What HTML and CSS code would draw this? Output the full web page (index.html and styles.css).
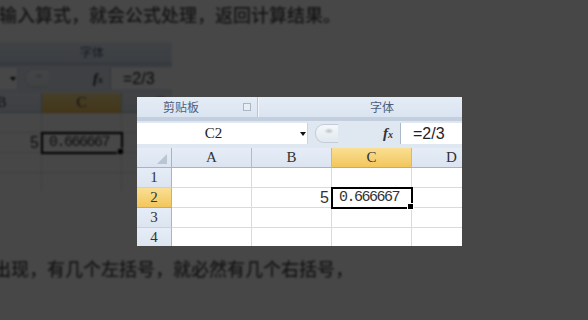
FILE: index.html
```html
<!DOCTYPE html>
<html lang="zh-CN">
<head>
    <meta charset="UTF-8">
    <meta name="viewport" content="width=device-width, initial-scale=1.0">
    <title>公式计算</title>
    <link rel="stylesheet" href="styles.css">
</head>
<body>
    <!-- Article behind the lightbox -->
    <div class="article">
        <p class="lead">格中输入算式，就会公式处理，返回计算结果。</p>
        <div class="figure">
            <div class="sheet">
                <div class="ribbon">
                    <div class="group clip">剪贴板<span class="launcher"></span></div>
                    <div class="group font">字体</div>
                </div>
                <div class="fbar">
                    <div class="namebox"><span class="ref">C2</span><span class="arrow"></span></div>
                    <div class="fbar-mid"><span class="knob"></span><span class="fx">f<small>x</small></span></div>
                    <div class="formula">=2/3</div>
                </div>
                <div class="grid">
                    <div class="corner"></div>
                    <div class="colhead">A</div>
                    <div class="colhead">B</div>
                    <div class="colhead active">C</div>
                    <div class="colhead">D</div>

                    <div class="rowhead">1</div>
                    <div class="cell"></div><div class="cell"></div><div class="cell"></div><div class="cell"></div>

                    <div class="rowhead active">2</div>
                    <div class="cell"></div><div class="cell num">5</div><div class="cell selected">0.666667</div><div class="cell"></div>

                    <div class="rowhead">3</div>
                    <div class="cell"></div><div class="cell"></div><div class="cell"></div><div class="cell"></div>

                    <div class="rowhead">4</div>
                    <div class="cell"></div><div class="cell"></div><div class="cell"></div><div class="cell"></div>
                </div>
            </div>
        </div>
        <p class="tail">对出现，有几个左括号，就必然有几个右括号，</p>
    </div>

    <!-- Lightbox -->
    <div class="lightbox">
        <div class="sheet">
            <div class="ribbon">
                <div class="group clip">剪贴板<span class="launcher"></span></div>
                <div class="group font">字体</div>
            </div>
            <div class="fbar">
                <div class="namebox"><span class="ref">C2</span><span class="arrow"></span></div>
                <div class="fbar-mid"><span class="knob"></span><span class="fx">f<small>x</small></span></div>
                <div class="formula">=2/3</div>
            </div>
            <div class="grid">
                <div class="corner"></div>
                <div class="colhead">A</div>
                <div class="colhead">B</div>
                <div class="colhead active">C</div>
                <div class="colhead">D</div>

                <div class="rowhead">1</div>
                <div class="cell"></div><div class="cell"></div><div class="cell"></div><div class="cell"></div>

                <div class="rowhead active">2</div>
                <div class="cell"></div><div class="cell num">5</div><div class="cell selected">0.666667</div><div class="cell"></div>

                <div class="rowhead">3</div>
                <div class="cell"></div><div class="cell"></div><div class="cell"></div><div class="cell"></div>

                <div class="rowhead">4</div>
                <div class="cell"></div><div class="cell"></div><div class="cell"></div><div class="cell"></div>
            </div>
        </div>
    </div>
</body>
</html>
```

FILE: styles.css
```css
body {
    margin: 0;
    background-color: #ffffff;
    font-family: "Noto Sans CJK SC", "Noto Sans", sans-serif;
    overflow: hidden;
}
.article {
    margin-left: -41px;
    filter: blur(0.8px);
}
.article p {
    margin: 0;
    font-size: 18px;
    line-height: 28px;
    font-weight: 500;
    color: #4a4a4a;
    white-space: nowrap;
}
.article .lead {
    text-indent: 4px;
}
.article .figure {
    margin: 14px 0 0 -112px;
}
.article .tail {
    margin-top: 63px;
    text-indent: 16px;
}

/* lightbox over the page */
.lightbox {
    position: fixed;
    top: 0;
    left: 0;
    right: 0;
    bottom: 0;
    background-color: rgba(0, 0, 0, 0.72);
    padding: 97px 0 0 137px;
}

/* excel screenshot */
.sheet {
    width: 325px;
    height: 149px;
    overflow: hidden;
    background-color: #ffffff;
    font-family: "Liberation Serif", serif;
}
.ribbon {
    display: flex;
    height: 20px;
    background: linear-gradient(#e4ecf6, #dae4f0);
    border-bottom: 4px solid #c3cfde;
}
.group {
    position: relative;
    font-family: "Noto Sans CJK SC", sans-serif;
    font-size: 12px;
    line-height: 20px;
    color: #4c5f7e;
    text-align: center;
}
.group.clip {
    width: 121px;
    padding-right: 58px;
    box-sizing: border-box;
    text-align: right;
    border-right: 1px solid #b7c6d8;
    box-shadow: 1px 0 0 #f2f6fb;
}
.launcher {
    position: absolute;
    right: 6px;
    top: 6px;
    width: 6px;
    height: 6px;
    border: 1px solid #aab6c4;
    background-color: #e8edf3;
}
.group.font {
    flex: 1;
    padding-right: 68px;
    box-sizing: border-box;
    text-align: right;
}
.fbar {
    display: flex;
    height: 21px;
    padding: 2px 0 4px;
    background-color: #dfe7f1;
}
.namebox {
    display: flex;
    align-items: center;
    width: 170px;
    background-color: #ffffff;
    border-right: 1px solid #c9d4e1;
}
.ref {
    width: 153px;
    text-align: center;
    font-size: 15px;
    color: #222;
}
.arrow {
    margin-left: 10px;
    border-left: 3px solid transparent;
    border-right: 3px solid transparent;
    border-top: 4px solid #111;
}
.fbar-mid {
    display: flex;
    align-items: center;
    width: 92px;
    border-right: 1px solid #a9b8ca;
}
.knob {
    width: 22px;
    height: 17px;
    margin-left: 7px;
    border-radius: 9px 0 0 9px;
    border: 1px solid #c3ccd7;
    border-right: none;
    background: radial-gradient(ellipse 5px 3px at 13px 6px, #b8c1cc, transparent), linear-gradient(#f5f8fb, #e2e8ef);
}
.fx {
    margin-left: auto;
    margin-right: 7px;
    font-weight: bold;
    font-style: italic;
    font-size: 15px;
    color: #333;
}
.fx small {
    font-size: 10px;
}
.formula {
    flex: 1;
    padding-left: 12px;
    background-color: #ffffff;
    font-family: "Liberation Sans", sans-serif;
    font-size: 16px;
    line-height: 21px;
    color: #222;
}
.grid {
    display: grid;
    grid-template-columns: 35px 80px 80px 80px 80px;
    grid-auto-rows: 20px;
    font-size: 15px;
    color: #333;
}
.corner,
.colhead,
.rowhead {
    background: linear-gradient(#e6edf7, #dbe4f0);
    box-sizing: border-box;
    text-align: center;
    line-height: 19px;
}
.corner {
    position: relative;
    border-right: 1px solid #9eb6ce;
    border-bottom: 1px solid #9eb6ce;
}
.corner::after {
    content: "";
    position: absolute;
    right: 4px;
    bottom: 3px;
    border-left: 10px solid transparent;
    border-bottom: 10px solid #b9c5d3;
}
.colhead {
    border-right: 1px solid #a9bdd3;
    border-bottom: 1px solid #9eb6ce;
}
.rowhead {
    border-right: 1px solid #9eb6ce;
    border-bottom: 1px solid #c4d2e3;
}
.colhead.active,
.rowhead.active {
    background: linear-gradient(#f9df94, #f2c65c);
    border-bottom-color: #e8a33a;
}
.cell {
    box-sizing: border-box;
    border-right: 1px solid #d8dadd;
    border-bottom: 1px solid #d8dadd;
    line-height: 19px;
    padding: 0 4px;
}
.cell.num {
    text-align: right;
    font-family: "Liberation Sans", sans-serif;
    font-size: 16px;
    padding-right: 2px;
}
.cell.selected {
    position: relative;
    outline: 2px solid #000;
    outline-offset: -1px;
    font-family: "Liberation Mono", monospace;
    font-size: 15px;
    letter-spacing: -1.5px;
    padding-left: 7px;
}
.cell.selected::after {
    content: "";
    position: absolute;
    right: -3px;
    bottom: -3px;
    width: 5px;
    height: 5px;
    background-color: #000;
    border: 1px solid #fff;
}
```
